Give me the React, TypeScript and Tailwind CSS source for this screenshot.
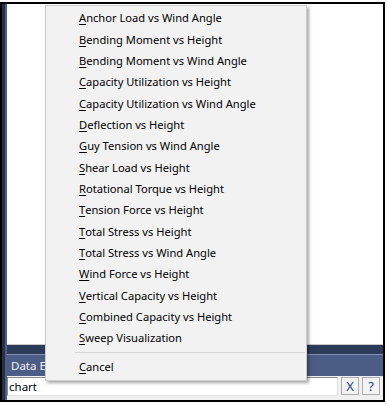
import React from 'react';

// Chart picker popup shown over the data entry window
const chartItems = [
  'Anchor Load vs Wind Angle',
  'Bending Moment vs Height',
  'Bending Moment vs Wind Angle',
  'Capacity Utilization vs Height',
  'Capacity Utilization vs Wind Angle',
  'Deflection vs Height',
  'Guy Tension vs Wind Angle',
  'Shear Load vs Height',
  'Rotational Torque vs Height',
  'Tension Force vs Height',
  'Total Stress vs Height',
  'Total Stress vs Wind Angle',
  'Wind Force vs Height',
  'Vertical Capacity vs Height',
  'Combined Capacity vs Height',
  'Sweep Visualization',
];

function MenuItem({ label }: { label: string }) {
  return (
    <div className="h-[21.33px] flex items-center pl-[33px] text-black whitespace-nowrap">
      <span className="underline underline-offset-2">{label.charAt(0)}</span>
      {label.slice(1)}
    </div>
  );
}

export default function App() {
  return (
    <div
      className="relative w-[387px] h-[406px] bg-white overflow-hidden text-[11.15px]"
      style={{ fontFamily: '"Segoe UI", "Noto Sans", sans-serif' }}
    >
      <div className="mt-[2px] w-[385px] h-[400px] border-2 border-black flex">
        <div className="w-[3px] bg-[#23304a]" />
        <div className="w-[2px] bg-[#4d5f85]" />
        <div className="flex-1 flex flex-col">
          <div className="h-[341px] bg-white border-b border-[#c8c8c8]" />
          <div className="h-[9px] bg-[#2c3b58]" />
          <div className="h-px bg-[#8493b3]" />
          <div className="h-[21px] bg-[#4b5d84] flex items-center pl-[4px] text-[#eef0f4] text-[11.5px]">
            Data Entry
          </div>
          <div className="flex-1 bg-[#f0f0f0] flex items-start pt-px gap-[3px]">
            <div className="w-[331px] h-[19px] bg-white border border-[#8a8a8a] border-r-[#e3e3e3] border-b-[#e3e3e3] flex items-center pl-px text-black text-[11.5px]">
              chart
            </div>
            <button className="w-[18px] h-[18px] bg-[#f3f3f3] border border-[#adadad] flex items-center justify-center text-[#1f3a8a] text-[13px] leading-none">
              X
            </button>
            <button className="w-[18px] h-[18px] bg-[#f3f3f3] border border-[#adadad] flex items-center justify-center text-[#1f3a8a] text-[13px] leading-none">
              ?
            </button>
          </div>
        </div>
      </div>

      <div className="absolute left-[45px] top-[5px] w-[262px] bg-[#f2f2f2] border border-[#cccccc] py-[2px] shadow-[2px_2px_3px_rgba(0,0,0,0.35)]">
        {chartItems.map((label) => (
          <MenuItem key={label} label={label} />
        ))}
        <div className="h-[7px] flex items-center pl-[29px] pr-px">
          <div className="h-px w-full bg-[#d7d7d7]" />
        </div>
        <MenuItem label="Cancel" />
      </div>
    </div>
  );
}
